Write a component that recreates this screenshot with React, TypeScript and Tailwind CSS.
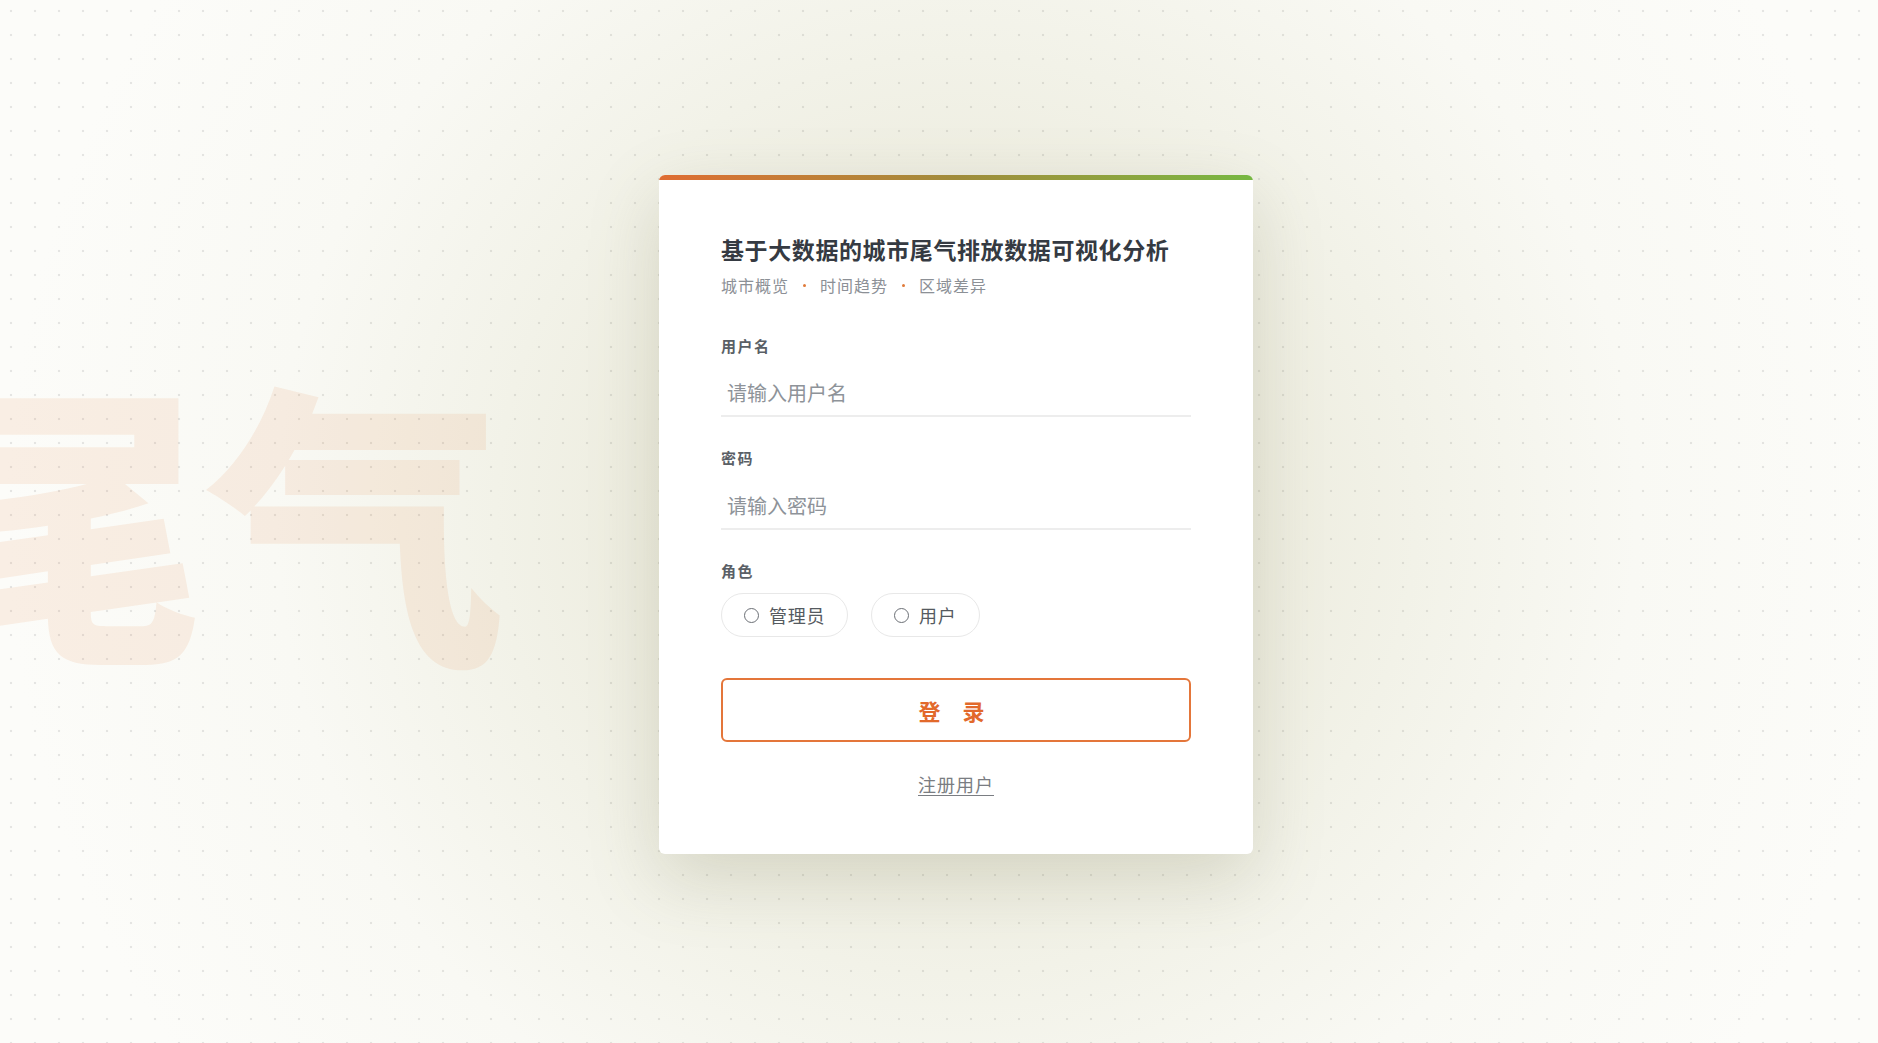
import React from 'react';

export default function App() {
  return (
    <main className="relative min-h-screen overflow-hidden bg-[#fcfcf9] bg-[radial-gradient(circle_at_956px_514px,#e8e8d8_0px,#ecebdd_260px,#f2f2e8_460px,#f9f9f4_680px,#fcfcf9_950px)] font-['Noto_Sans_CJK_SC','Noto_Sans',sans-serif]">
      {/* dot grid */}
      <div className="pointer-events-none absolute inset-0 bg-[radial-gradient(circle,rgba(0,0,0,0.09)_1px,transparent_1.6px)] bg-[length:24px_24px] bg-[position:-1px_-1px]" />

      {/* watermark */}
      <div className="pointer-events-none absolute left-[-94px] top-[362px] select-none whitespace-nowrap text-[300px] font-black leading-none text-[#e07a30]/10">
        尾气
      </div>

      <div className="relative z-10 flex min-h-screen items-center justify-center pl-[34px] pb-[14px]">
        <div className="w-[594px] overflow-hidden rounded-[6px] bg-white shadow-[0_24px_70px_rgba(120,120,80,0.22)]">
          <div className="h-[5px] bg-linear-to-r from-[#df6c32] via-[#a08c3b] to-[#76b742]" />

          <div className="px-[62px] pt-[53px] pb-[58px]">
            <h1 className="whitespace-nowrap text-[23px] font-bold leading-[32px] tracking-[0.6px] text-[#353a42]">
              基于大数据的城市尾气排放数据可视化分析
            </h1>
            <div className="mt-2 flex items-center gap-[14px] text-[16px] leading-[24px] tracking-[1px] text-[#8c9096]">
              <span>城市概览</span>
              <span className="h-[3px] w-[3px] rounded-full bg-[#e07a3a]" />
              <span>时间趋势</span>
              <span className="h-[3px] w-[3px] rounded-full bg-[#e07a3a]" />
              <span>区域差异</span>
            </div>

            <label className="mt-[37px] block text-[15px] font-bold leading-[24px] tracking-[1.5px] text-[#5a5f66]">用户名</label>
            <input
              className="mt-[11px] block h-[48px] w-full border-b-2 border-[#ededed] bg-transparent px-[6px] text-[20px] text-[#333] outline-none placeholder:text-[#8e9399]"
              placeholder="请输入用户名"
            />

            <label className="mt-[29px] block text-[15px] font-bold leading-[24px] tracking-[1.5px] text-[#5a5f66]">密码</label>
            <input
              type="password"
              className="mt-[12px] block h-[48px] w-full border-b-2 border-[#ededed] bg-transparent px-[6px] text-[20px] text-[#333] outline-none placeholder:text-[#8e9399]"
              placeholder="请输入密码"
            />

            <label className="mt-[29px] block text-[15px] font-bold leading-[24px] tracking-[1.5px] text-[#5a5f66]">角色</label>
            <div className="mt-[10px] flex gap-[23px]">
              <label className="flex h-[44px] items-center gap-[10px] rounded-full border border-[#e8e8e8] bg-white px-[22px] text-[18px] tracking-[0.7px] text-[#555a60]">
                <span className="h-[15px] w-[15px] rounded-full border-[1.5px] border-[#6b6f75]" />
                管理员
              </label>
              <label className="flex h-[44px] items-center gap-[10px] rounded-full border border-[#e8e8e8] bg-white px-[22px] text-[18px] tracking-[0.7px] text-[#555a60]">
                <span className="h-[15px] w-[15px] rounded-full border-[1.5px] border-[#6b6f75]" />
                用户
              </label>
            </div>

            <button className="mt-[41px] flex h-[64px] w-full items-center justify-center gap-[22px] rounded-[6px] border-2 border-[#e4763a] bg-white pr-[9px] text-[22px] font-bold text-[#e2692b]">
              <span>登</span>
              <span>录</span>
            </button>

            <div className="mt-[30px] text-center text-[18px] leading-[24px] tracking-[1px]">
              <a className="text-[#7a7d82] underline underline-offset-[3px]">注册用户</a>
            </div>
          </div>
        </div>
      </div>
    </main>
  );
}
